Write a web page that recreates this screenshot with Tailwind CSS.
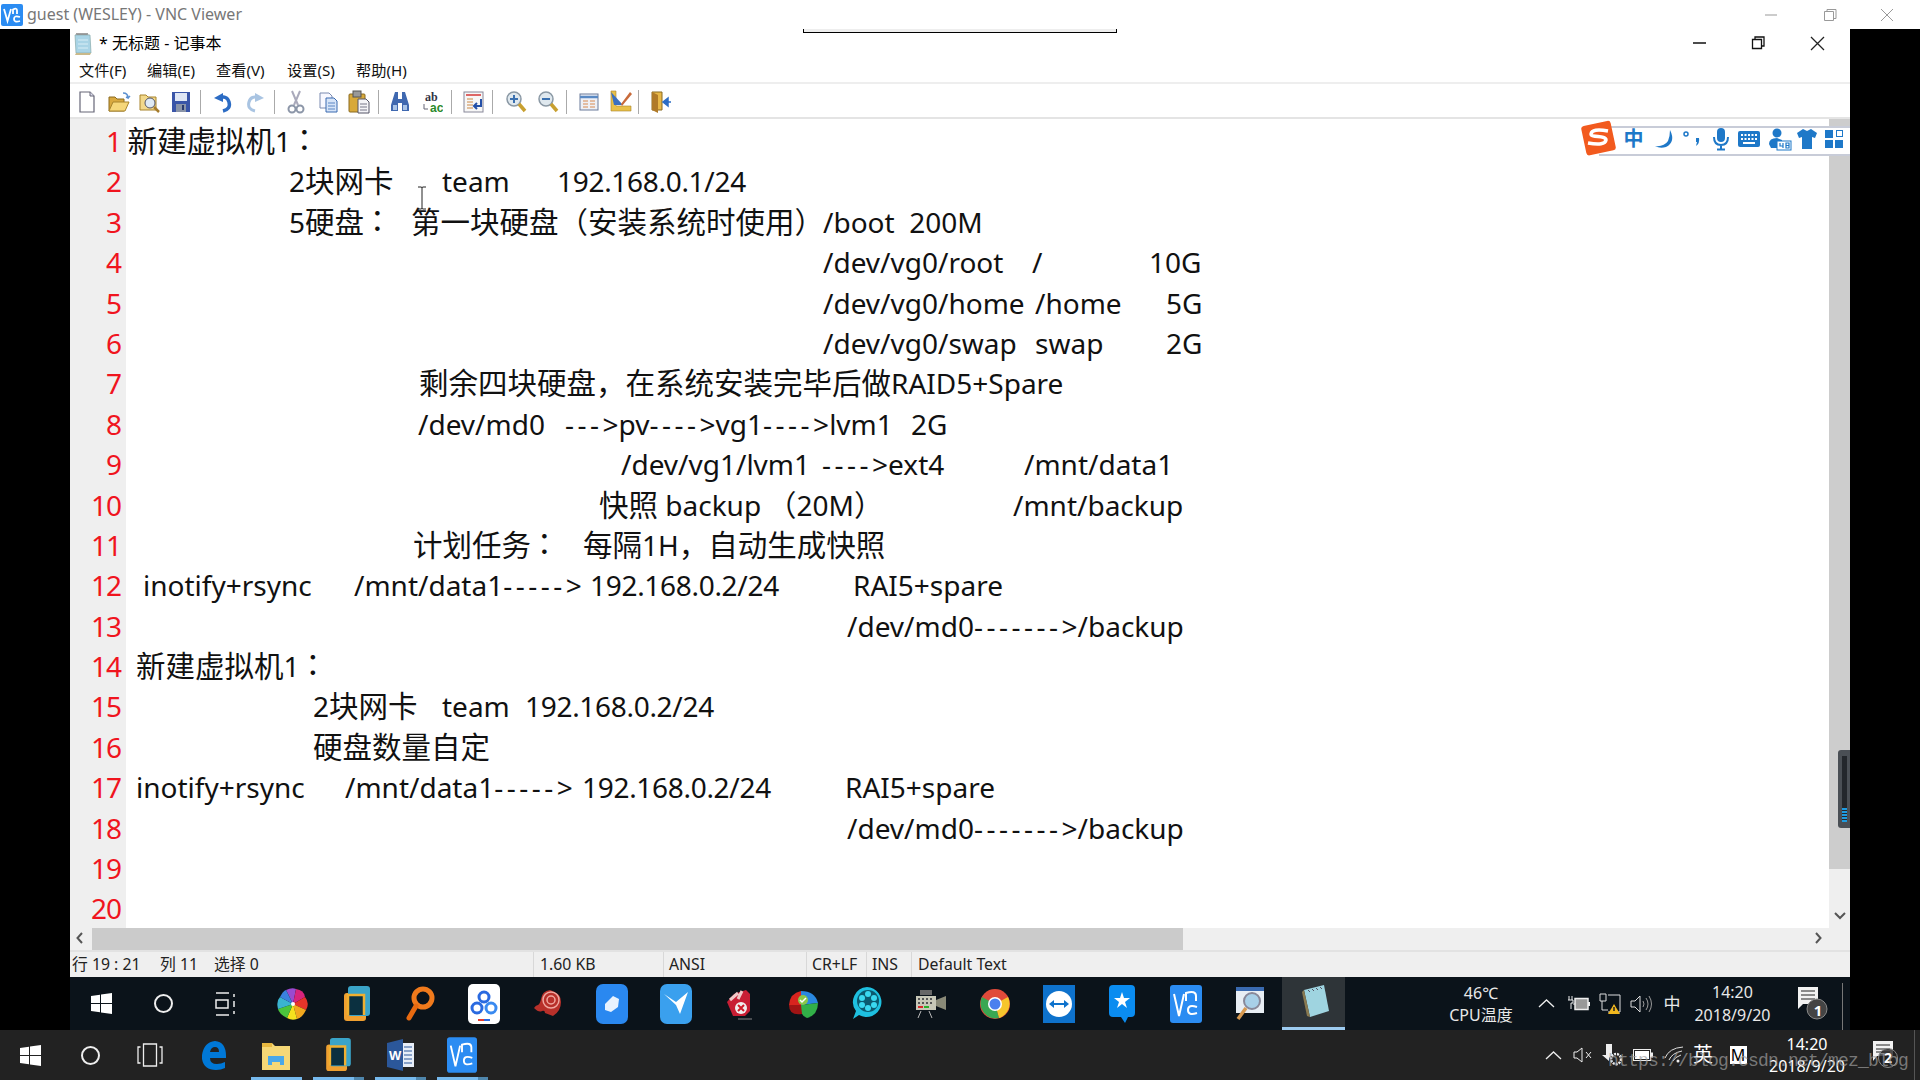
<!DOCTYPE html>
<html lang="zh">
<head>
<meta charset="utf-8">
<title>guest (WESLEY) - VNC Viewer</title>
<script src="https://cdn.jsdelivr.net/npm/@tailwindcss/browser@4"></script>
</head>
<body class="m-0 bg-black">
<div class="relative w-[1920px] h-[1080px] overflow-hidden flex flex-col bg-black [font-family:'Noto_Sans','Noto_Sans_CJK_SC',sans-serif]">

  <!-- VNC title bar -->
  <div class="h-[29px] bg-white flex items-center shrink-0">
    <svg class="w-[22px] h-[22px] ml-[1px]" viewBox="0 0 22 22"><rect width="22" height="22" rx="2" fill="#2b8cf2"/><path d="M3 5l3.500 12L10 5" fill="none" stroke="#fff" stroke-width="1.800"/><path d="M12 10V5.500q4-2 4 1V10M19 13q-6-2-6 2t6 2" fill="none" stroke="#fff" stroke-width="1.800"/></svg>
    <span class="ml-[4px] text-[16px] text-[#777] -mt-[1px]">guest (WESLEY) - VNC Viewer</span>
    <div class="ml-auto flex items-center text-[#999] mr-[4px]">
      <svg class="w-[58px] h-[14px]" viewBox="0 0 58 14"><path d="M23 7h12" stroke="#999" stroke-width="1"/></svg>
      <svg class="w-[58px] h-[14px]" viewBox="0 0 58 14"><path d="M24.500 3.500h9v9h-9zM27 3.500V1.500h9v9h-2.500" fill="none" stroke="#999" stroke-width="1"/></svg>
      <svg class="w-[58px] h-[14px]" viewBox="0 0 58 14"><path d="M23 1l12 12M35 1L23 13" stroke="#999" stroke-width="1"/></svg>
    </div>
  </div>

  <div class="flex-1 flex min-h-0">
    <div class="w-[70px] shrink-0 bg-black"></div>
    <div class="w-[1780px] shrink-0 flex flex-col">
      <!-- Notepad title -->
      <div class="h-[30px] bg-white flex items-center shrink-0 text-black">
        <svg class="w-[20px] h-[24px] ml-[3px]" viewBox="0 0 20 24"><path d="M2 3h15l1 18H3z" fill="#a9d4e6" stroke="#8aa" stroke-width=".7"/><path d="M3 21l-1 2h15l1-2z" fill="#c9b98a"/><path d="M3 3l1-2 1 2 1-2 1 2 1-2 1 2 1-2 1 2 1-2 1 2 1-2 1 2" fill="none" stroke="#666" stroke-width=".7"/><path d="M5 8h10M5 12h10M5 16h10" stroke="#d9eef6"/></svg>
        <span class="ml-[6px] text-[16px] -mt-[2px]">* 无标题 - 记事本</span>
        <div class="ml-auto flex items-center mr-[2px] -mt-[2px]">
          <svg class="w-[58px] h-[16px]" viewBox="0 0 58 16"><path d="M23 8h13" stroke="#111" stroke-width="1.500"/></svg>
          <svg class="w-[60px] h-[16px]" viewBox="0 0 60 16"><path d="M24.500 4.500h9v9h-9zM27 4.500V2h9v9h-2.500" fill="none" stroke="#111" stroke-width="1.300"/></svg>
          <svg class="w-[60px] h-[16px]" viewBox="0 0 60 16"><path d="M23 2l13 13M36 2L23 15" stroke="#222" stroke-width="1.300"/></svg>
        </div>
      </div>
      <!-- Menu -->
      <div class="h-[25px] bg-white flex items-center shrink-0 text-[15.200px] text-[#111] border-b-[2px] border-[#eeeeee]">
        <span class="ml-[9px] w-[68px]">文件(F)</span>
        <span class="w-[69px]">编辑(E)</span>
        <span class="w-[71px]">查看(V)</span>
        <span class="w-[69px]">设置(S)</span>
        <span>帮助(H)</span>
      </div>
      <!-- Toolbar -->
      <div class="h-[35px] pt-[2px] bg-white flex items-center shrink-0 border-b-[2px] border-[#e4e4e4]">
        <span class="ml-[1px] w-[32px] flex justify-center"><svg class="w-[22px] h-[22px]" viewBox="0 0 22 22"><path d="M4 1h10l4 4v16H4z" fill="#fff" stroke="#667" stroke-width="1.200"/><path d="M14 1v4h4" fill="#dde" stroke="#667"/></svg></span>
        <span class="w-[32px] flex justify-center"><svg class="w-[24px] h-[22px]" viewBox="0 0 24 22"><path d="M2 6h6l2 2h7v12H2z" fill="#d9a93f" stroke="#8a6a20"/><path d="M2 20l4-9h16l-4 9z" fill="#f6d77a" stroke="#a8842c"/><path d="M16 2q5 0 5 5l-2-1M21 7l2-2" fill="none" stroke="#5a8fd0" stroke-width="1.500"/></svg></span>
        <span class="w-[30px] flex justify-center"><svg class="w-[23px] h-[22px]" viewBox="0 0 23 22"><path d="M1 4h6l2 2h8v13H1z" fill="#f2d88a" stroke="#a8842c"/><circle cx="11" cy="12" r="5" fill="#dfeaf4" stroke="#556"/><path d="M15 16l5 5" stroke="#a67c2c" stroke-width="2.500"/></svg></span>
        <span class="w-[32px] flex justify-center"><svg class="w-[20px] h-[22px]" viewBox="0 0 20 22"><rect x="1" y="1" width="18" height="20" fill="#3a55a8"/><rect x="4" y="2" width="12" height="8" fill="#dfe6f4"/><rect x="5" y="13" width="10" height="8" fill="#8a94a8"/><rect x="11" y="14" width="2" height="5" fill="#2a3a70"/></svg></span>
        <span class="ml-[3px] w-px h-[24px] bg-[#aaa]"></span>
        <span class="ml-[6px] w-[32px] flex justify-center"><svg class="w-[20px] h-[22px]" viewBox="0 0 20 22"><path d="M6 7q8-3 10 4t-6 9" fill="none" stroke="#2c6cc4" stroke-width="3.500"/><path d="M1 7l9-5v9z" fill="#2c6cc4"/></svg></span>
        <span class="w-[32px] flex justify-center"><svg class="w-[20px] h-[22px]" viewBox="0 0 20 22"><path d="M14 7q-8-3-10 4t6 9" fill="none" stroke="#a9c4e2" stroke-width="3"/><path d="M19 7l-9-5v9z" fill="#a9c4e2"/></svg></span>
        <span class="ml-[3px] w-px h-[24px] bg-[#aaa]"></span>
        <span class="ml-[5px] w-[32px] flex justify-center"><svg class="w-[18px] h-[24px]" viewBox="0 0 18 24"><path d="M5 1l6 14M13 1L7 15" stroke="#aab" stroke-width="2"/><circle cx="5" cy="19" r="3.500" fill="none" stroke="#8c96a8" stroke-width="2"/><circle cx="13" cy="19" r="3.500" fill="none" stroke="#8c96a8" stroke-width="2"/></svg></span>
        <span class="w-[32px] flex justify-center"><svg class="w-[22px] h-[22px]" viewBox="0 0 22 22"><path d="M3 2h9l3 3v12H3z" fill="#f8f8ff" stroke="#7a8ab0"/><path d="M9 7h8l3 3v11H9z" fill="#d6e4f8" stroke="#3a6ab0"/><path d="M11 12h7M11 15h7M11 18h7" stroke="#5a86c4"/></svg></span>
        <span class="w-[30px] flex justify-center"><svg class="w-[24px] h-[24px]" viewBox="0 0 24 24"><rect x="2" y="4" width="16" height="18" rx="1" fill="#d8a93a" stroke="#8a6a20"/><rect x="6" y="1" width="8" height="6" fill="#999" stroke="#555"/><path d="M11 9h8l3 3v11H11z" fill="#f4f4f8" stroke="#556"/><path d="M13 14h7M13 17h7M13 20h7" stroke="#778"/></svg></span>
        <span class="ml-[4px] w-px h-[24px] bg-[#aaa]"></span>
        <span class="ml-[5px] w-[32px] flex justify-center"><svg class="w-[22px] h-[22px]" viewBox="0 0 22 22"><path d="M6 1h3v7h4V1h3l4 13v6h-7v-8H9v8H2v-6z" fill="#3f68b0"/><path d="M4 14h4v5H4zM14 14h4v5h-4z" fill="#a9c4e8"/></svg></span>
        <span class="w-[32px] flex justify-center"><svg class="w-[22px] h-[24px]" viewBox="0 0 22 24"><text x="4" y="11" font-size="12" font-weight="700" font-family="Liberation Serif" fill="#334">ab</text><text x="9" y="22" font-size="12" font-weight="700" font-family="Liberation Sans" fill="#2a8a2a">ac</text><path d="M3 14v5h4" fill="none" stroke="#667"/></svg></span>
        <span class="ml-[3px] w-px h-[24px] bg-[#aaa]"></span>
        <span class="ml-[6px] w-[32px] flex justify-center"><svg class="w-[22px] h-[22px]" viewBox="0 0 22 22"><rect x="1" y="1" width="19" height="20" fill="#f7f7f7" stroke="#889"/><path d="M3 4h15" stroke="#d66" stroke-width="2"/><path d="M4 8h6M4 11h6M4 14h6M4 17h6" stroke="#c84"/><path d="M18 8v7h-6M14 12l-3 3 3 3" fill="none" stroke="#2450a8" stroke-width="2"/></svg></span>
        <span class="ml-[2px] w-px h-[24px] bg-[#aaa]"></span>
        <span class="ml-[7px] w-[32px] flex justify-center"><svg class="w-[22px] h-[24px]" viewBox="0 0 22 24"><circle cx="9" cy="9" r="7" fill="#dfe8ee" stroke="#8a98a4" stroke-width="1.500"/><path d="M14 14l6 7" stroke="#c8a030" stroke-width="3.500"/><path d="M5 9h8M9 5v8" stroke="#3a70b0" stroke-width="2"/></svg></span>
        <span class="w-[31px] flex justify-center"><svg class="w-[22px] h-[24px]" viewBox="0 0 22 24"><circle cx="9" cy="9" r="7" fill="#dfe8ee" stroke="#8a98a4" stroke-width="1.500"/><path d="M14 14l6 7" stroke="#c8a030" stroke-width="3.500"/><path d="M5 9h8" stroke="#3a70b0" stroke-width="2"/></svg></span>
        <span class="ml-[3px] w-px h-[24px] bg-[#aaa]"></span>
        <span class="ml-[6px] w-[32px] flex justify-center"><svg class="w-[20px] h-[18px]" viewBox="0 0 20 18"><rect x="1" y="1" width="18" height="16" fill="#eef0f6" stroke="#6a7a9a"/><path d="M1 4h18" stroke="#5a8ac4" stroke-width="2.500"/><path d="M4 8h5M11 8h5M4 11h5M11 11h5M4 14h5M11 14h5" stroke="#d88a50"/></svg></span>
        <span class="w-[31px] flex justify-center"><svg class="w-[24px] h-[24px]" viewBox="0 0 24 24"><path d="M2 1v20h20v-5H7V1z" fill="#e8c048" stroke="#a8842c" stroke-width=".6"/><path d="M2 2l12 13H5z" fill="#3a70c0"/><path d="M12 14l9-12 2 2-10 12z" fill="#c86a3a"/></svg></span>
        <span class="ml-[2px] w-px h-[24px] bg-[#aaa]"></span>
        <span class="ml-[6px] w-[32px] flex justify-center"><svg class="w-[22px] h-[24px]" viewBox="0 0 22 24"><path d="M2 2h10v18H2z" fill="#e8b848" stroke="#8a6a20"/><path d="M2 2l6 3v18l-6-3z" fill="#b07a28"/><path d="M21 12h-6M18 8l-5 4 5 4z" fill="#2c6cc4" stroke="#2c6cc4" stroke-width="1.500"/></svg></span>
      </div>
      <!-- Editor -->
      <div class="relative h-[809px] flex bg-white shrink-0 overflow-hidden">
        <div class="w-[56px] bg-[#efefef] pt-[2px] text-[#f0141e] text-[28px] tracking-[-1px] text-right pr-[5px] shrink-0">
          <div class="h-[40.4px] leading-[40.4px]">1</div><div class="h-[40.4px] leading-[40.4px]">2</div><div class="h-[40.4px] leading-[40.4px]">3</div><div class="h-[40.4px] leading-[40.4px]">4</div><div class="h-[40.4px] leading-[40.4px]">5</div><div class="h-[40.4px] leading-[40.4px]">6</div><div class="h-[40.4px] leading-[40.4px]">7</div><div class="h-[40.4px] leading-[40.4px]">8</div><div class="h-[40.4px] leading-[40.4px]">9</div><div class="h-[40.4px] leading-[40.4px]">10</div><div class="h-[40.4px] leading-[40.4px]">11</div><div class="h-[40.4px] leading-[40.4px]">12</div><div class="h-[40.4px] leading-[40.4px]">13</div><div class="h-[40.4px] leading-[40.4px]">14</div><div class="h-[40.4px] leading-[40.4px]">15</div><div class="h-[40.4px] leading-[40.4px]">16</div><div class="h-[40.4px] leading-[40.4px]">17</div><div class="h-[40.4px] leading-[40.4px]">18</div><div class="h-[40.4px] leading-[40.4px]">19</div><div class="h-[40.4px] leading-[40.4px]">20</div>
        </div>
        <div class="flex-1 pt-[2px] text-[28px] text-[#111] whitespace-nowrap [&>div]:flex [&>div]:items-baseline [&>div]:h-[40.4px] [&>div]:leading-[40.4px] [&>div>span]:shrink-0 [&_i]:not-italic [&_i]:text-[29.500px] [&_u]:no-underline [&_u]:tracking-[3.500px] [&_b]:font-normal [&_b]:tracking-[-0.300px] [&_s]:no-underline [&_s]:text-[29.500px] [&_s]:relative [&_s]:left-[6px] [&_s]:top-[-3px]">
          <div><span class="w-[1.500px]"></span><span><i>新建虚拟机</i>1<s>&#xFF1A;</s></span></div>
          <div><span class="w-[163px]"></span><span class="w-[153px]">2<i>块网卡</i></span><span class="w-[115px]">team</span><span><b>192.168.0.1/24</b></span></div>
          <div><span class="w-[163px]"></span><span class="w-[122px]">5<i>硬盘</i><s>&#xFF1A;</s></span><span class="w-[412px]"><i>第一块硬盘&#xFF08;安装系统时使用&#xFF09;</i></span><span>/boot&nbsp; 200M</span></div>
          <div><span class="w-[697px]"></span><span class="w-[209px]">/dev/vg0/root</span><span class="w-[117px]">/</span><span>10G</span></div>
          <div><span class="w-[697px]"></span><span class="w-[212px]">/dev/vg0/home</span><span class="w-[131px]">/home</span><span>5G</span></div>
          <div><span class="w-[697px]"></span><span class="w-[212px]">/dev/vg0/swap</span><span class="w-[131px]">swap</span><span>2G</span></div>
          <div><span class="w-[293px]"></span><span><i>剩余四块硬盘&#xFF0C;在系统安装完毕后做</i>RAID5+Spare</span></div>
          <div><span class="w-[292px]"></span><span class="w-[147px]">/dev/md0</span><span class="w-[346px]"><u>---</u>&gt;pv<u>----</u>&gt;vg1<u>----</u>&gt;lvm1</span><span>2G</span></div>
          <div><span class="w-[495px]"></span><span class="w-[201px]">/dev/vg1/lvm1</span><span class="w-[202px]"><u>----</u>&gt;ext4</span><span>/mnt/data1</span></div>
          <div><span class="w-[473px]"></span><span class="w-[168px]"><i>快照</i> backup</span><span class="w-[246px]"><i>&#xFF08;</i>20M<i>&#xFF09;</i></span><span>/mnt/backup</span></div>
          <div><span class="w-[287px]"></span><span class="w-[170px]"><i>计划任务</i><s>&#xFF1A;</s></span><span><i>每隔</i>1H<i>&#xFF0C;自动生成快照</i></span></div>
          <div><span class="w-[17px]"></span><span class="w-[211px]">inotify+rsync</span><span class="w-[236px]">/mnt/data1<u>-----</u>&gt;</span><span class="w-[263px]"><b>192.168.0.2/24</b></span><span>RAI5+spare</span></div>
          <div><span class="w-[721px]"></span><span>/dev/md0<u>-------</u>&gt;/backup</span></div>
          <div><span class="w-[10px]"></span><span><i>新建虚拟机</i>1<s>&#xFF1A;</s></span></div>
          <div><span class="w-[187px]"></span><span class="w-[129px]">2<i>块网卡</i></span><span class="w-[83px]">team</span><span><b>192.168.0.2/24</b></span></div>
          <div><span class="w-[187px]"></span><span><i>硬盘数量自定</i></span></div>
          <div><span class="w-[10px]"></span><span class="w-[209px]">inotify+rsync</span><span class="w-[237px]">/mnt/data1<u>-----</u>&gt;</span><span class="w-[263px]"><b>192.168.0.2/24</b></span><span>RAI5+spare</span></div>
          <div><span class="w-[721px]"></span><span>/dev/md0<u>-------</u>&gt;/backup</span></div>
        </div>
        <!-- vertical scrollbar -->
        <div class="w-[21px] shrink-0 bg-[#efefef] flex flex-col items-center">
          <div class="w-full h-[750px] bg-[#cdcdcd]"></div>
          <svg class="mt-[43px] w-[12px] h-[8px]" viewBox="0 0 12 8"><path d="M1 1l5 5 5-5" fill="none" stroke="#555" stroke-width="2"/></svg>
        </div>
        <!-- IME bar -->
        <div class="absolute left-[1511px] top-[1px] w-[269px] h-[37px] flex items-center">
          <div class="absolute left-[18px] right-0 top-[6px] h-[30px] bg-white border-y-[2px] border-[#c8ccd8]"></div>
          <svg class="relative w-[37px] h-[37px] shrink-0" viewBox="0 0 37 37"><rect x="2.500" y="3" width="30" height="30" rx="3" fill="#f25a1e" transform="rotate(-12 18 18)"/><path d="M27 11q-16-3-17 3c0 4 15 1 15 6q-1 6-18 3" fill="none" stroke="#fff" stroke-width="3.500"/></svg>
          <div class="relative flex items-center text-[#1e78c8] mt-[1px]">
            <span class="w-[29px] ml-[1px] text-center text-[20px] font-bold leading-none">中</span>
            <svg class="ml-[2px] w-[28px] h-[22px]" viewBox="0 0 28 22"><path d="M20 2q6 12-4 17-6 2-11-1 9 1 13-5 2-5 2-11z" fill="#1e78c8"/></svg>
            <svg class="w-[27px] h-[22px]" viewBox="0 0 27 22"><circle cx="8" cy="6" r="2" fill="none" stroke="#1e78c8" stroke-width="1.500"/><path d="M18 10h3q1 5-3 8l1-4h-1z" fill="#1e78c8"/></svg>
            <svg class="ml-[1px] w-[30px] h-[24px]" viewBox="0 0 30 24"><rect x="11" y="1" width="8" height="14" rx="4" fill="#1e78c8"/><path d="M8 10q0 8 7 8t7-8M15 18v4M11 22.500h8" fill="none" stroke="#1e78c8" stroke-width="2"/></svg>
            <svg class="w-[26px] h-[20px]" viewBox="0 0 26 20"><rect x="2" y="2" width="22" height="16" rx="2" fill="#1e78c8"/><path d="M5 6h16M5 10h16" stroke="#fff" stroke-width="2" stroke-dasharray="2 1.500"/><path d="M7 14h12" stroke="#fff" stroke-width="2"/></svg>
            <svg class="ml-[5px] w-[25px] h-[24px]" viewBox="0 0 25 24"><circle cx="10" cy="6" r="4.500" fill="#1e78c8"/><path d="M2 17q0-6 8-6l5 2v8H4z" fill="#1e78c8"/><rect x="10" y="14" width="14" height="9" fill="#fff" stroke="#1e78c8"/><path d="M13 16v3h3M16 16v5M19 16h3v5h-3zM19 18.500h3" fill="none" stroke="#1e78c8" stroke-width="1.200"/></svg>
            <svg class="ml-[4px] w-[22px] h-[22px]" viewBox="0 0 22 22"><path d="M7 1l4 2 4-2 6 4-2 5-3-1v12H6V9l-3 1-2-5z" fill="#1e78c8"/></svg>
            <svg class="ml-[6px] w-[20px] h-[20px]" viewBox="0 0 20 20"><rect x="1" y="1" width="8" height="8" fill="#1e78c8"/><rect x="12.500" y="1.500" width="6" height="6" fill="#fff" stroke="#1e78c8"/><rect x="1" y="11" width="8" height="8" fill="#1e78c8"/><rect x="11" y="11" width="8" height="8" fill="#1e78c8"/></svg>
          </div>
        </div>
      </div>
      <!-- horizontal scrollbar -->
      <div class="h-[22px] bg-[#efefef] flex items-center shrink-0 relative">
        <svg class="ml-[6px] -mt-[2px] w-[8px] h-[12px]" viewBox="0 0 8 12"><path d="M6 1L1.500 6 6 11" fill="none" stroke="#555" stroke-width="2"/></svg>
        <div class="ml-[8px] w-[1091px] h-[22px] bg-[#cbcbcb]"></div>
        <svg class="ml-auto mr-[28px] -mt-[2px] w-[8px] h-[12px]" viewBox="0 0 8 12"><path d="M2 1l4.500 5L2 11" fill="none" stroke="#555" stroke-width="2"/></svg>
      </div>
      <!-- Status -->
      <div class="h-[27px] bg-[#efefef] border-t-[2px] border-[#e2e2e2] flex items-center shrink-0 text-[15.800px] text-[#222] [&>span]:h-[25px] [&>span]:leading-[24px]">
        <span class="ml-[2px] w-[88px]">行 19 : 21</span>
        <span class="w-[54px]">列 11</span>
        <span class="w-[320px] border-r border-[#d8d8d8]">选择 0</span>
        <span class="pl-[6px] w-[130px] border-r border-[#d8d8d8]">1.60 KB</span>
        <span class="pl-[5px] w-[143px] border-r border-[#d8d8d8]">ANSI</span>
        <span class="pl-[5px] w-[60px] border-r border-[#d8d8d8]">CR+LF</span>
        <span class="pl-[5px] w-[45px] border-r border-[#d8d8d8]">INS</span>
        <span class="pl-[6px]">Default Text</span>
      </div>
      <!-- Inner taskbar -->
      <div class="h-[53px] bg-[#0b131a] flex items-center shrink-0 text-[#e8e8e8] relative">
        <span class="w-[62px] flex justify-center"><svg class="w-[21px] h-[21px]" viewBox="0 0 21 21"><path d="M0 3l9-1.300V10H0zM10 1.500L21 0v10H10zM0 11h9v8.300L0 18zM10 11h11v10l-11-1.500z" fill="#fff"/></svg></span>
        <span class="w-[62px] flex justify-center"><svg class="w-[21px] h-[21px]" viewBox="0 0 21 21"><circle cx="10.500" cy="10.500" r="8.500" fill="none" stroke="#eee" stroke-width="2"/></svg></span>
        <span class="w-[62px] flex justify-center"><svg class="w-[22px] h-[24px] ml-[2px]" viewBox="0 0 22 24"><path d="M1 1h13M1 23h13M1 8h12v8H1zM19 2v3M19 9v6M19 19v3" fill="none" stroke="#eee" stroke-width="1.500"/></svg></span>
        <span class="ml-[5px] w-[64px] flex justify-center"><svg class="w-[32px] h-[32px]" viewBox="0 0 32 32"><path d="M16 16L9 2q6-3 10-1z" fill="#9a4ad0"/><path d="M16 16l3-15q8 1 9 8z" fill="#d8247c"/><path d="M16 16L28 9q5 6 1 13z" fill="#e8342a"/><path d="M16 16l13 6q-4 8-9 9z" fill="#f2a81e"/><path d="M16 16l4 15q-5 2-10-1z" fill="#f5e21e"/><path d="M16 16L10 30q-8-4-9-9z" fill="#4ac43c"/><path d="M16 16L1 21q-2-8 2-12z" fill="#3ab4d0"/><path d="M16 16L3 9q3-6 6-7z" fill="#3a82e0"/><circle cx="16" cy="16" r="2" fill="#fff"/></svg></span>
        <span class="w-[63.800px] flex justify-center"><svg class="w-[28px] h-[38px]" viewBox="0 0 28 38"><rect x="1" y="8" width="22" height="28" rx="3" fill="#f0a030"/><rect x="5" y="1" width="22" height="30" rx="3" fill="#3aa4c8"/><rect x="6" y="10" width="14" height="20" fill="#0b3040"/><path d="M5 30V10h16v20" fill="none" stroke="#f0b030" stroke-width="2.500"/></svg></span>
        <span class="w-[63.800px] flex justify-center"><svg class="w-[30px] h-[36px]" viewBox="0 0 30 36"><circle cx="17" cy="12" r="9" fill="none" stroke="#f07a1c" stroke-width="5"/><path d="M10 20l-7 12" stroke="#e86a10" stroke-width="5" stroke-linecap="round"/></svg></span>
        <span class="w-[63.800px] flex justify-center"><svg class="w-[32px] h-[40px]" viewBox="0 0 32 40"><rect width="32" height="40" rx="5" fill="#fff"/><circle cx="16" cy="13" r="5" fill="none" stroke="#2a6ae0" stroke-width="3"/><circle cx="9" cy="24" r="5" fill="none" stroke="#2a6ae0" stroke-width="3"/><circle cx="23" cy="24" r="5" fill="none" stroke="#3a8af0" stroke-width="3"/><path d="M10 36h6" stroke="#e83a2a" stroke-width="2"/><path d="M16 36h6" stroke="#2a6ae0" stroke-width="2"/></svg></span>
        <span class="w-[63.800px] flex justify-center"><svg class="w-[30px] h-[32px]" viewBox="0 0 30 32"><path d="M1 20q5 5 8 3 3-1 3 2l8 3q8-5 8-14T17 2Q9 3 8 11q-1 5-3 6-2 0-4 3z" fill="#b8302a"/><circle cx="18" cy="12" r="8" fill="none" stroke="#f0a8a0" stroke-width="1.500"/><circle cx="18" cy="12" r="4" fill="none" stroke="#f0a8a0" stroke-width="1.500"/></svg></span>
        <span class="w-[63.800px] flex justify-center"><svg class="w-[32px] h-[40px]" viewBox="0 0 32 40"><rect width="32" height="40" rx="7" fill="#2a88f0"/><path d="M9 20l8-8 6 3-1 8-7 5-6-2z" fill="#e8f2fe"/></svg></span>
        <span class="w-[63.800px] flex justify-center"><svg class="w-[32px] h-[40px]" viewBox="0 0 32 40"><rect width="32" height="40" rx="7" fill="#3aa0ee"/><path d="M4 10l12 8 12-10-8 22-4-9z" fill="#fff"/></svg></span>
        <span class="w-[63.800px] flex justify-center"><svg class="w-[32px] h-[36px]" viewBox="0 0 32 36"><path d="M3 16l7-8 12-4 4 4v17l-5 5H9z" fill="#c81e34"/><path d="M6 14l8-7M14 13l4-8" stroke="#f0c8c8" stroke-width="3"/><circle cx="17" cy="22" r="6" fill="#f0f0f0"/><path d="M14 19l6 6M20 19l-6 6" stroke="#d01e2a" stroke-width="2"/><path d="M14 33h14" stroke="#888"/></svg></span>
        <span class="w-[63.800px] flex justify-center"><svg class="w-[32px] h-[30px]" viewBox="0 0 32 30"><path d="M2 16Q3 4 14 2v14z" fill="#d8241e"/><path d="M14 2q14 0 17 12l-17 2z" fill="#2a88e0"/><path d="M14 16l17-2q0 12-11 15-8-3-6-13z" fill="#32b048"/><path d="M2 16h12l1 9q-13 2-13-9z" fill="#a01414"/><circle cx="16" cy="11" r="5" fill="#8ac84a"/><path d="M13 11l2 2 4-4" fill="none" stroke="#fff" stroke-width="1.500"/></svg></span>
        <span class="w-[63.800px] flex justify-center"><svg class="w-[32px] h-[38px]" viewBox="0 0 32 38"><path d="M16 2a15 15 0 1 1-8 28l-6 4 3-8A15 15 0 0 1 16 2z" fill="#1ec0e0"/><circle cx="17" cy="16" r="11" fill="#0b5a70"/><circle cx="17" cy="9" r="3" fill="#3ad8f0"/><circle cx="17" cy="23" r="3" fill="#3ad8f0"/><circle cx="11" cy="13" r="3" fill="#3ad8f0"/><circle cx="23" cy="13" r="3" fill="#3ad8f0"/><circle cx="11" cy="20" r="3" fill="#3ad8f0"/><circle cx="23" cy="20" r="3" fill="#3ad8f0"/></svg></span>
        <span class="w-[63.800px] flex justify-center"><svg class="w-[32px] h-[30px]" viewBox="0 0 32 30"><rect x="1" y="7" width="20" height="14" fill="#c8c8b8"/><path d="M3 10h16M3 14h16" stroke="#555" stroke-dasharray="2 2" stroke-width="2"/><path d="M3 18h5" stroke="#d82a2a" stroke-width="2"/><path d="M9 18h5" stroke="#2ab02a" stroke-width="2"/><path d="M21 11l10-4v14l-10-4z" fill="#8a8a78"/><rect x="5" y="1" width="12" height="5" fill="#666"/><path d="M6 22l-3 7M14 22l3 7" stroke="#bbb"/></svg></span>
        <span class="w-[63.800px] flex justify-center"><svg class="w-[30px] h-[30px]" viewBox="0 0 30 30"><circle cx="15" cy="15" r="15" fill="#e04a3a"/><path d="M15 15L28 8a15 15 0 0 1-9 21z" fill="#f6c52c"/><path d="M15 15L19 29A15 15 0 0 1 2 8z" fill="#3aa752"/><circle cx="15" cy="15" r="7" fill="#fff"/><circle cx="15" cy="15" r="5.500" fill="#4a80ee"/></svg></span>
        <span class="w-[63.800px] flex justify-center"><svg class="w-[32px] h-[38px]" viewBox="0 0 32 38"><rect width="32" height="38" fill="#0e72cc"/><circle cx="16" cy="19" r="13" fill="#fff"/><path d="M6 19l5-4v3h10v-3l5 4-5 4v-3H11v3z" fill="#0e72cc"/></svg></span>
        <span class="w-[63.800px] flex justify-center"><svg class="w-[26px] h-[38px]" viewBox="0 0 26 38"><path d="M4 0h18q4 0 4 4v24q0 4-4 4h-3l-3 6-4-6H4q-4 0-4-4V4q0-4 4-4z" fill="#0a8cf0"/><path d="M13 7l2 6h6l-5 4 2 6-5-4-5 4 2-6-5-4h6z" fill="#fff"/></svg></span>
        <span class="w-[63.800px] flex justify-center"><svg class="w-[32px] h-[38px]" viewBox="0 0 32 38"><rect width="32" height="38" rx="3" fill="#2b8cf2"/><path d="M4 9l5 22 5-22" fill="none" stroke="#fff" stroke-width="2"/><path d="M16 16V8q10-3 10 3v5M27 22q-9-3-9 3t9 3" fill="none" stroke="#fff" stroke-width="2"/></svg></span>
        <span class="w-[63.800px] flex justify-center"><svg class="w-[30px] h-[36px]" viewBox="0 0 30 36"><rect x="1" y="1" width="28" height="26" fill="#e8eef4"/><rect x="1" y="1" width="28" height="4" fill="#3a6ab0"/><circle cx="17" cy="15" r="8" fill="#a8d0e8" stroke="#889" stroke-width="2"/><path d="M11 22l-8 11" stroke="#d89a50" stroke-width="3.500"/></svg></span>
        <span class="w-[63px] h-[53px] bg-[#2e3438] border-b-[3px] border-[#9ccbf0] flex justify-center items-center"><svg class="w-[30px] h-[36px] ml-[3px]" viewBox="0 0 30 36"><path d="M4 6l20-5 5 26-19 6z" fill="#9fd4e0"/><path d="M4 6l6 27-3-1L2 8z" fill="#8a7a50"/><path d="M8 6l2 2M12 5l2 2M16 4l2 2M20 3l2 2" stroke="#556"/></svg></span>
        <div class="ml-[96px] w-[80px] text-center text-[16px] leading-[22px]"><div>46℃</div><div>CPU温度</div></div>
        <span class="ml-[11px] w-[30px] flex justify-center"><svg class="w-[17px] h-[9px]" viewBox="0 0 17 9"><path d="M1 8l7.500-7L16 8" fill="none" stroke="#eee" stroke-width="1.300"/></svg></span>
        <span class="ml-[2px] w-[30px] flex justify-center"><svg class="w-[22px] h-[16px]" viewBox="0 0 22 16"><path d="M4 0v4M1 0v4M0 4h5v3H3v6M5 8h2" stroke="#eee" fill="none"/><rect x="7" y="2.500" width="13" height="11" fill="#999" stroke="#eee" stroke-width="1.500"/><rect x="20" y="6" width="2" height="4" fill="#eee"/></svg></span>
        <span class="w-[32px] flex justify-center"><svg class="w-[22px] h-[22px]" viewBox="0 0 22 22"><path d="M1 1h6v7H1zM9 2h12v17H9" fill="none" stroke="#ddd"/><path d="M3 8v9h6" fill="none" stroke="#ddd"/><path d="M15 11l6 10H9z" fill="#f2b81e"/><path d="M15 14v4" stroke="#222" stroke-width="1.500"/></svg></span>
        <span class="w-[30px] flex justify-center"><svg class="w-[22px] h-[20px]" viewBox="0 0 22 20"><path d="M1 7h4l5-5v16l-5-5H1z" fill="none" stroke="#ddd"/><path d="M13 7q2 3 0 6M16 4q4 6 0 12M19 2q5 8 0 16" fill="none" stroke="#999"/></svg></span>
        <span class="w-[32px] text-center text-[17px]">中</span>
        <div class="w-[89px] text-center text-[16px] leading-[23px]"><div>14:20</div><div>2018/9/20</div></div>
        <span class="ml-[7px] w-[58px] flex justify-center relative"><svg class="w-[32px] h-[34px]" viewBox="0 0 32 34"><path d="M1 0h20v17H6l-5 5z" fill="#f2f2f2"/><path d="M4 4h14M4 8h14M4 12h14" stroke="#222"/><circle cx="20" cy="22" r="10" fill="#444" stroke="#888"/></svg><span class="absolute left-[23px] top-[13px] text-[15px] font-bold leading-[20px] text-white w-[22px] text-center">1</span></span>
        <span class="w-px h-[47px] self-end bg-[#777]"></span>
      </div>
    </div>
    <div class="flex-1 bg-black"></div>
  </div>

  <!-- Outer taskbar -->
  <div class="h-[50px] shrink-0 bg-[#222] flex items-center text-white [&_.t]:h-[50px] [&_.t]:flex [&_.t]:items-center [&_.t]:justify-center">
    <span class="t w-[60px]"><svg class="w-[21px] h-[21px]" viewBox="0 0 21 21"><path d="M0 3l9-1.300V10H0zM10 1.500L21 0v10H10zM0 11h9v8.300L0 18zM10 11h11v10l-11-1.500z" fill="#fff"/></svg></span>
    <span class="t w-[60px]"><svg class="w-[21px] h-[21px]" viewBox="0 0 21 21"><circle cx="10.500" cy="10.500" r="8.500" fill="none" stroke="#eee" stroke-width="2"/></svg></span>
    <span class="t w-[60px]"><svg class="w-[26px] h-[24px]" viewBox="0 0 26 24"><path d="M6.500 1h13v22h-13zM3.500 4H1v16h2.500M22.500 4H25v16h-2.500" fill="none" stroke="#eee" stroke-width="1.300"/></svg></span>
    <span class="t w-[62px] ml-[3px]"><svg class="w-[26px] h-[30px]" viewBox="0 0 26 30"><path d="M1 15Q3 2 14 1q11 1 11 15v2H9q0 6 7 6 4 0 8-2v6q-4 2-9 2Q3 30 1 19zM9 12h9q0-5-4-5-4 0-5 5z" fill="#0078d7"/></svg></span>
    <span class="t w-[62px] relative"><svg class="w-[28px] h-[30px]" viewBox="0 0 28 30"><path d="M0 3h10l3 3h15v24H0z" fill="#f6d876"/><path d="M0 3h10v4H0z" fill="#e8b840"/><path d="M6 16h16v9H6z" fill="#4aa8e8"/><path d="M10 22h8v8h-8z" fill="#f6d876"/></svg><i class="absolute bottom-0 left-[6px] w-[51px] h-[3px] bg-[#76b9ed]"></i></span>
    <span class="t w-[62px] relative"><svg class="w-[27px] h-[36px]" viewBox="0 0 28 38"><rect x="1" y="8" width="22" height="28" rx="3" fill="#f0a030"/><rect x="5" y="1" width="22" height="30" rx="3" fill="#3aa4c8"/><rect x="6" y="10" width="14" height="20" fill="#0b3040"/><path d="M5 30V10h16v20" fill="none" stroke="#f0b030" stroke-width="2.500"/></svg><i class="absolute bottom-0 left-[6px] w-[41px] h-[3px] bg-[#76b9ed]"></i><i class="absolute bottom-0 left-[47px] w-[10px] h-[3px] bg-[#4f86ac]"></i></span>
    <span class="t w-[62px] relative"><svg class="w-[27px] h-[32px]" viewBox="0 0 27 32"><path d="M0 4l16-4v32L0 28z" fill="#2b579a"/><path d="M16 4h11v24H16z" fill="#e8eef8"/><path d="M17 8h8M17 12h8M17 16h8M17 20h8M17 24h8" stroke="#2b579a"/><text x="2" y="21" font-size="13" font-weight="700" font-family="Liberation Sans" fill="#fff">W</text></svg><i class="absolute bottom-0 left-[6px] w-[41px] h-[3px] bg-[#76b9ed]"></i><i class="absolute bottom-0 left-[47px] w-[10px] h-[3px] bg-[#4f86ac]"></i></span>
    <span class="t w-[62px] relative"><svg class="w-[30px] h-[40px]" viewBox="0 0 32 38"><rect width="32" height="38" rx="3" fill="#2b8cf2"/><path d="M4 9l5 22 5-22" fill="none" stroke="#fff" stroke-width="2"/><path d="M16 16V8q10-3 10 3v5M27 22q-9-3-9 3t9 3" fill="none" stroke="#fff" stroke-width="2"/></svg><i class="absolute bottom-0 left-[6px] w-[41px] h-[3px] bg-[#76b9ed]"></i><i class="absolute bottom-0 left-[47px] w-[10px] h-[3px] bg-[#4f86ac]"></i></span>
    <span class="t w-[30px] ml-[1045px]"><svg class="w-[17px] h-[9px]" viewBox="0 0 17 9"><path d="M1 8l7.500-7L16 8" fill="none" stroke="#eee" stroke-width="1.300"/></svg></span>
    <span class="t w-[29px]"><svg class="w-[20px] h-[16px]" viewBox="0 0 20 16"><path d="M1 5h3l5-4v14l-5-4H1z" fill="none" stroke="#eee"/><path d="M13 5l5 6M18 5l-5 6" stroke="#eee"/></svg></span>
    <span class="t w-[30px]"><svg class="w-[20px] h-[24px]" viewBox="0 0 20 24"><path d="M4 1h6v11l-3 3v3L0 12h4z" fill="#eee"/><circle cx="14" cy="16" r="5" fill="none" stroke="#eee" stroke-width="2.500" stroke-dasharray="2 1"/></svg></span>
    <span class="t w-[32px]"><svg class="w-[21px] h-[12px]" viewBox="0 0 21 12"><rect x=".5" y=".5" width="17" height="11" fill="none" stroke="#eee"/><rect x="2" y="2" width="14" height="8" fill="#fff"/><rect x="18" y="3.500" width="2" height="5" fill="#eee"/></svg></span>
    <span class="t w-[30px]"><svg class="w-[20px] h-[18px]" viewBox="0 0 20 18"><path d="M1 12q4-10 18-11M5 14q3-7 13-9M9 15q2-4 8-6" fill="none" stroke="#ddd"/><circle cx="14" cy="15" r="1.500" fill="#eee"/></svg></span>
    <span class="t w-[28px] text-[20px]">英</span>
    <span class="t w-[42px]"><span class="w-[17px] h-[18px] bg-white text-black text-[16px] leading-[18px] text-center">M</span></span>
    <div class="w-[96px] text-center text-[16px] leading-[22px]"><div>14:20</div><div>2018/9/20</div></div>
    <span class="t w-[56px] relative"><svg class="w-[20px] h-[22px] -mt-[6px]" viewBox="0 0 20 22"><path d="M0 0h20v15H4l-4 5z" fill="#f2f2f2"/><path d="M3 4h14M3 8h14M3 11h14" stroke="#222"/></svg><span class="absolute left-[23px] top-[18px] w-[20px] h-[20px] rounded-full bg-[#222]/80 border border-[#888] text-[14px] font-bold leading-[18px] text-center">2</span></span>
    <span class="ml-[3px] w-px h-[50px] bg-[#555]"></span>
  </div>

  <!-- Overlays -->
  <div class="absolute left-[803px] top-[29px] w-[314px] h-[4px] bg-[#eee] border-x-[1px] border-b-[1px] border-black"></div>
  <div class="absolute left-[1838px] top-[750px] w-[12px] h-[78px] rounded-l-[3px] bg-[#4a4f55] flex justify-center py-[6px]"><div class="w-[5px] h-full bg-[#23272c] flex items-end"><div class="w-full h-[14px] bg-[repeating-linear-gradient(#1e9be0_0_2px,#23272c_2px_3px)]"></div></div></div>
  <svg class="absolute left-[417px] top-[186px] w-[10px] h-[24px]" viewBox="0 0 10 24"><path d="M1 1h3q1 0 1 1v20q0 1-1 1H1M9 1H6q-1 0-1 1M9 23H6q-1 0-1-1" fill="none" stroke="#222" stroke-width="1"/></svg>
  <div class="absolute left-[1608px] top-[1046px] text-[18px] tracking-[-0.800px] text-[#a0a0a0]/70 [font-family:'Liberation_Mono',monospace] whitespace-nowrap leading-[30px]">https://blog.csdn.net/mez_blog</div>
</div>
</body>
</html>
